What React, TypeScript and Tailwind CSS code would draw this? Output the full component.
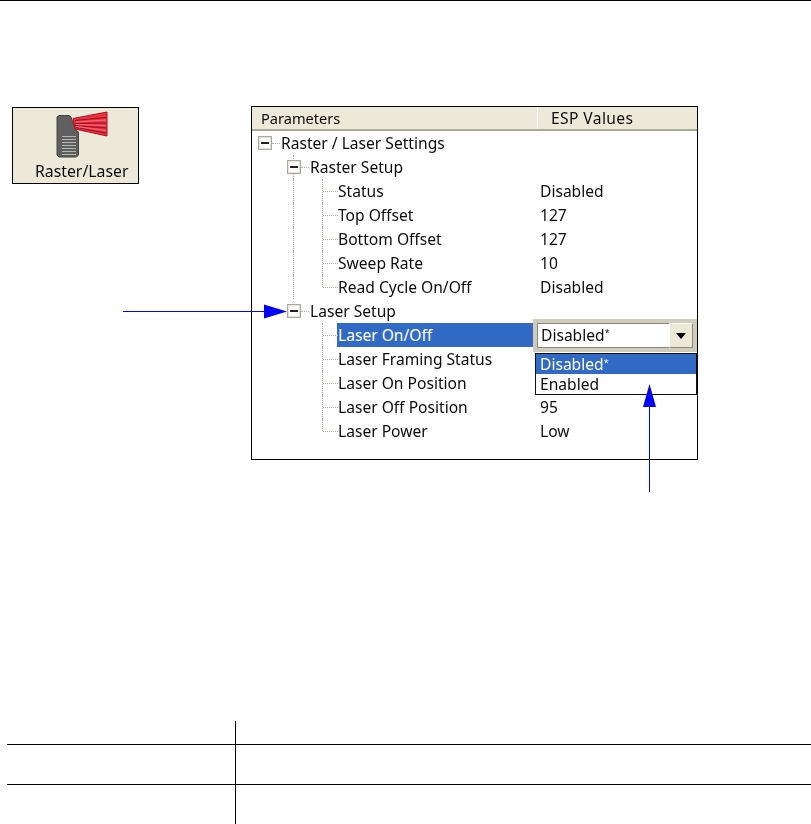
const FONT = "font-['Noto_Sans','Liberation_Sans',sans-serif]";
const DOT = "border-dotted border-[#aeac9c]";

function Box() {
  return (
    <span className="flex h-[14px] w-[14px] items-center justify-center border border-[#aca899] bg-white shadow-[inset_0_0_0_1px_#e4e2d6]">
      <span className="h-[2px] w-[8px] bg-[#222]" />
    </span>
  );
}

function Row({
  level,
  label,
  value,
  selected,
  guide,
  rootGuide,
}: {
  level: 0 | 1 | 2;
  label: string;
  value?: string;
  selected?: boolean;
  guide?: "mid" | "last" | "first";
  rootGuide?: boolean;
}) {
  return (
    <div className="relative flex h-6 items-center text-[15.6px] leading-6 text-[#0c0c0c]">
      {rootGuide && <span className={`absolute left-[41px] top-0 h-6 border-l ${DOT}`} />}
      {level === 2 && (
        <span
          className={
            guide === "last"
              ? `absolute left-[70px] top-0 h-3 border-l ${DOT}`
              : `absolute left-[70px] top-0 h-6 border-l ${DOT}`
          }
        />
      )}
      {level === 2 && <span className={`absolute left-[71px] top-3 w-[15px] border-t ${DOT}`} />}
      {level === 0 && (
        <div className="ml-[6px] flex items-center">
          <Box />
          <span className={`w-[8px] border-t ${DOT}`} />
          <span className="ml-[1px]">{label}</span>
        </div>
      )}
      {level === 1 && (
        <div className="relative ml-[35px] flex items-center">
          <Box />
          <span className={`w-[8px] border-t ${DOT}`} />
          <span className="ml-[1px]">{label}</span>
        </div>
      )}
      {level === 2 && (
        <div
          className={
            selected
              ? "ml-[85px] h-6 w-[198px] bg-[#316ac5] pl-[1px] text-white"
              : "ml-[85px] pl-[1px]"
          }
        >
          {label}
        </div>
      )}
      {value && <span className="absolute left-[288px]">{value}</span>}
    </div>
  );
}

function Combo() {
  return (
    <div className="absolute left-[281px] top-[212px] z-10 w-[164px] text-[15.6px] text-[#0c0c0c]">
      <div className="flex h-[33px] items-center border-[4px] border-[#cfccbc] bg-white pl-[4px] shadow-[inset_0_0_0_1px_#8a8878]">
        <span className="flex-1">
          Disabled<sup className="text-[9px] leading-none">*</sup>
        </span>
        <span className="flex h-[25px] w-[24px] items-center justify-center border border-b-[#8a8878] border-l-white border-r-[#8a8878] border-t-white bg-[#ece9d8]">
          <svg width="10" height="6" viewBox="0 0 10 6">
            <path d="M0 0h10L5 6z" fill="#000" />
          </svg>
        </span>
      </div>
      <div className="ml-[2px] mt-[1px] border border-[#111] bg-white">
        <div className="h-5 bg-[#316ac5] pl-[4px] leading-5 text-white">
          Disabled<sup className="text-[9px] leading-none">*</sup>
        </div>
        <div className="h-5 pl-[4px] leading-5">Enabled</div>
      </div>
    </div>
  );
}

export default function App() {
  return (
    <div className={`relative h-[824px] w-[811px] overflow-hidden bg-white ${FONT}`}>
      <div className="h-px bg-black" />

      <div className="flex pl-[12px] pt-[105px]">
        <div className="mt-px flex h-[77px] w-[127px] flex-col items-start border border-black bg-[#ece9d8]">
          <svg
            width="60"
            height="50"
            viewBox="50 111 60 50"
            className="ml-[37px] mt-[3px] shrink-0 blur-[0.4px]"
          >
            <path
              d="M59 115.5h10l2 1.5 4 12 3.5 3v23l-2 2H59l-2-2v-38z"
              fill="#5f5f5f"
              stroke="#444"
            />
            <path
              d="M62 136.5h14M62 139.5h14M62 142.5h14M62 145.5h14M62 148.5h14M62 151.5h14M62 154.5h14"
              stroke="#b4b4b0"
            />
            <path d="M73 118.5 L107 112 L107 136 L75 129 Z" fill="#ee3040" stroke="#a81020" />
            <path
              d="M75 120.5 L106 117.5 M75 123.5 L106 123 M75 125.5 L106 128 M76 127.5 L106 133"
              stroke="#8a1420"
            />
            <path d="M76 122 L106 120 M76 124.5 L106 125.5 M76 126.5 L106 130.5" stroke="#ff7080" />
          </svg>
          <span className="ml-[22px] text-[15.8px] leading-5 text-[#0c0c0c] blur-[0.3px]">
            Raster/Laser
          </span>
        </div>

        <div className="relative ml-[112px] h-[354px] w-[447px] border border-black bg-white">
          <div className="relative h-full blur-[0.3px]">
            <div className="flex h-[24px] border-b-[2px] border-[#aca899] bg-[#ece9d8] leading-[22px] text-[#0c0c0c]">
              <div className="w-[286px] border-r border-white pl-[9px] text-[14.6px]">Parameters</div>
              <div className="flex-1 pl-[13px] text-[15.6px] tracking-[0.4px]">ESP Values</div>
            </div>
            <Row level={0} label="Raster / Laser Settings" />
            <Row level={1} label="Raster Setup" rootGuide />
            <Row level={2} label="Status" value="Disabled" rootGuide />
            <Row level={2} label="Top Offset" value="127" rootGuide />
            <Row level={2} label="Bottom Offset" value="127" rootGuide />
            <Row level={2} label="Sweep Rate" value="10" rootGuide />
            <Row level={2} label="Read Cycle On/Off" value="Disabled" guide="last" rootGuide />
            <Row level={1} label="Laser Setup" />
            <Row level={2} label="Laser On/Off" selected />
            <Row level={2} label="Laser Framing Status" />
            <Row level={2} label="Laser On Position" />
            <Row level={2} label="Laser Off Position" value="95" />
            <Row level={2} label="Laser Power" value="Low" guide="last" />
            <Combo />
          </div>
        </div>
      </div>

      <svg className="absolute left-[120px] top-[300px]" width="170" height="24" viewBox="0 0 170 24">
        <path d="M3 11.5h142" stroke="#0000ff" strokeWidth="1" />
        <path d="M144 4.5 L167 11.5 L144 18.5 Z" fill="#0000ff" />
      </svg>
      <svg className="absolute left-[640px] top-[382px]" width="20" height="110" viewBox="0 0 20 110">
        <path d="M9.5 24v86" stroke="#0000ff" strokeWidth="1" />
        <path d="M3 25 L9.5 2 L16 25 Z" fill="#0000ff" />
      </svg>

      <div className="ml-[7px] mt-[261px] grid grid-cols-[229px_1fr] grid-rows-[23px_40px_40px]">
        <div className="border-r border-black" />
        <div />
        <div className="border-r border-t border-black" />
        <div className="border-t border-black" />
        <div className="border-r border-t border-black" />
        <div className="border-t border-black" />
      </div>
    </div>
  );
}
